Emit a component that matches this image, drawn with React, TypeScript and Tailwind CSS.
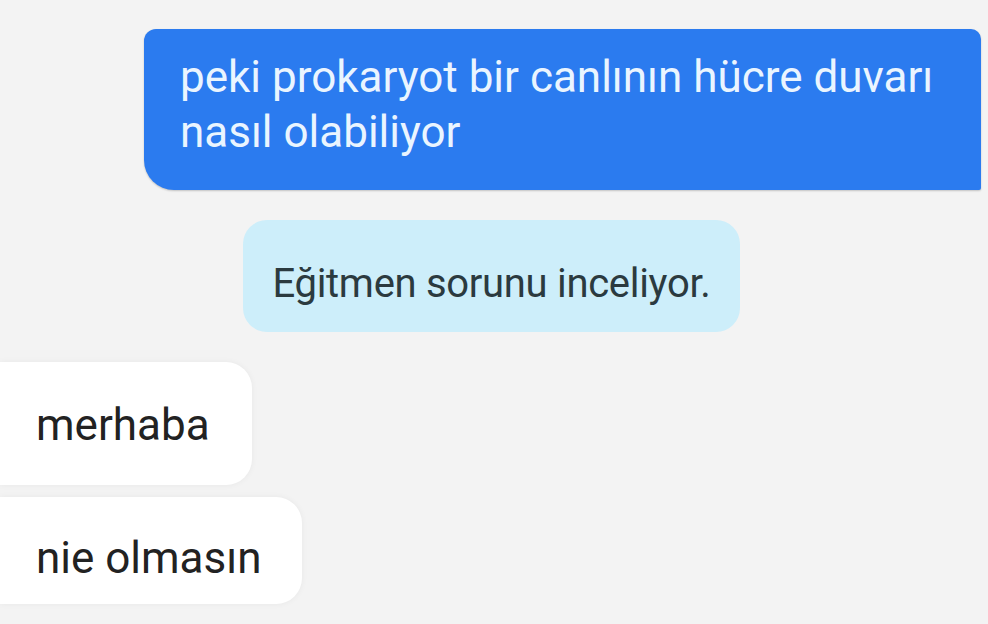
const font = { fontFamily: "Roboto, 'DejaVu Sans', sans-serif" };

function OutgoingBubble({ lines }: { lines: string[] }) {
  return (
    <div className="ml-[144px] mr-[7px] h-[161px] rounded-tl-[12px] rounded-tr-[10px] rounded-bl-[30px] rounded-br-[2px] bg-[#2b7bef] pl-[36px] pt-[21px] text-[44px] leading-[55px] text-[#eaf5ff] shadow-[0_1px_2px_rgba(0,0,0,0.2)]">
      {lines.map((l) => (
        <div key={l}>{l}</div>
      ))}
    </div>
  );
}

function SystemNote({ text }: { text: string }) {
  return (
    <div className="ml-[243px] flex h-[112px] w-[497px] items-center justify-center rounded-[24px] bg-[#cdeefa] pt-[16px] text-[40px] tracking-[-0.3px] text-[#2b3a3f]">
      {text}
    </div>
  );
}

function IncomingBubble({ text, className }: { text: string; className: string }) {
  return (
    <div className={`flex items-center rounded-r-[26px] bg-white pl-[36px] text-[44px] text-[#222222] shadow-[0_0_6px_rgba(0,0,0,0.05)] ${className}`}>
      {text}
    </div>
  );
}

export default function App() {
  return (
    <div className="h-[624px] w-[988px] overflow-hidden bg-[#f3f3f3] pt-[29px]" style={font}>
      <OutgoingBubble lines={["peki prokaryot bir canlının hücre duvarı", "nasıl olabiliyor"]} />
      <div className="mt-[30px]">
        <SystemNote text="Eğitmen sorunu inceliyor." />
      </div>
      <div className="mt-[30px] flex flex-col gap-[12px]">
        <IncomingBubble text="merhaba" className="h-[123px] w-[252px] pt-[2px]" />
        <IncomingBubble text="nie olmasın" className="h-[107px] w-[302px] pt-[14px]" />
      </div>
    </div>
  );
}
